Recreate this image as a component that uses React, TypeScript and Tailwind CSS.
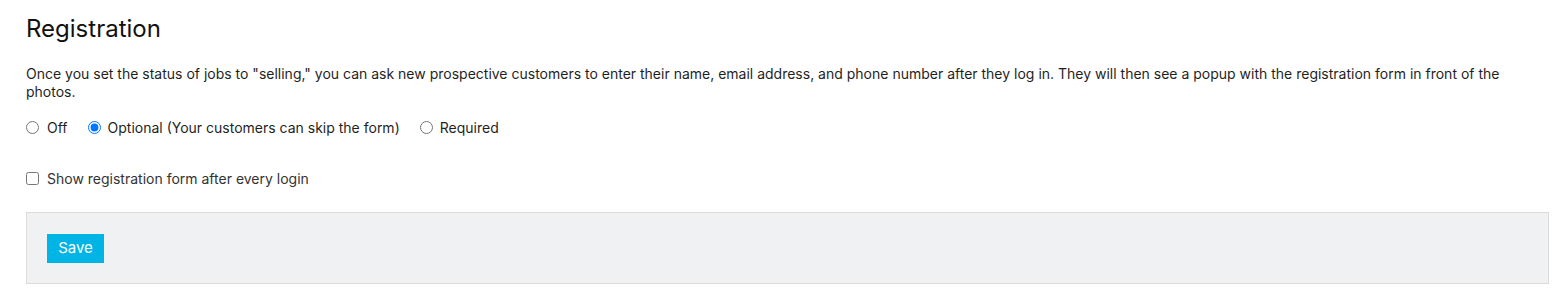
import React from "react";

export default function App() {
  return (
    <div
      className="min-h-[304px] bg-white pl-[26px] pr-[8px] pt-[13px] text-[#222]"
      style={{ fontFamily: "Inter, 'Noto Sans', sans-serif" }}
    >
      <h1 className="text-[24px] leading-[32px] font-normal text-[#111]">Registration</h1>
      <p className="mt-[20px] text-[14px] leading-[18px] text-[#1f1f1f]">
        Once you set the status of jobs to "selling," you can ask new prospective customers to enter their name, email
        address, and phone number after they log in. They will then see a popup with the registration form in front of
        the photos.
      </p>
      <div className="mt-[16px] flex h-[20px] items-center gap-x-[20px] text-[14px] text-[#1f1f1f]">
        <label className="flex items-center gap-[8px]">
          <input type="radio" name="reg" className="m-0 h-[13px] w-[13px]" />
          <span>Off</span>
        </label>
        <label className="flex items-center gap-[7px]">
          <input type="radio" name="reg" defaultChecked className="m-0 h-[13px] w-[13px]" />
          <span>Optional (Your customers can skip the form)</span>
        </label>
        <label className="flex items-center gap-[7px]">
          <input type="radio" name="reg" className="m-0 h-[13px] w-[13px]" />
          <span>Required</span>
        </label>
      </div>
      <div className="mt-[31px] flex h-[20px] items-center text-[14px] text-[#333]">
        <label className="flex items-center gap-[8px]">
          <input type="checkbox" className="m-0 h-[13px] w-[13px]" />
          <span>Show registration form after every login</span>
        </label>
      </div>
      <div className="mt-[24px] border border-[#dcdcdc] bg-[#f0f1f3] pl-[20px] pt-[21px] pb-[20px]">
        <button className="h-[29px] w-[57px] bg-[#00b4e6] text-[15px] text-white">Save</button>
      </div>
    </div>
  );
}
